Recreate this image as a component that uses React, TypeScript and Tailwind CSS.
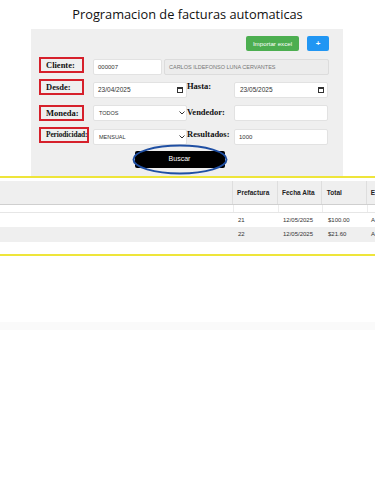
import React from "react";

const Label = ({ text, w, fs = "text-[8.5px]" }: { text: string; w: string; fs?: string }) => (
  <div className={`${w} ${fs} h-[16px] border-2 border-[#d6202b] flex items-center pl-[5px] font-['Liberation_Serif'] font-bold text-[#111] whitespace-nowrap overflow-visible`}>
    {text}
  </div>
);

const RLabel = ({ text }: { text: string }) => (
  <div className="w-[47px] font-['Liberation_Serif'] font-bold text-[8.5px] text-[#111] whitespace-nowrap leading-none pt-[3px]">
    {text}
  </div>
);

const Cal = () => (
  <svg width="6" height="6" viewBox="0 0 6 6" className="mr-[3px]">
    <rect x="0.5" y="0.5" width="5" height="5" fill="none" stroke="#333" strokeWidth="1" />
    <rect x="0.5" y="0.5" width="5" height="1.5" fill="#333" />
  </svg>
);

const Chev = () => (
  <svg width="6" height="4" viewBox="0 0 6 4" className="mr-[1px]">
    <path d="M0.5 0.5 L3 3 L5.5 0.5" fill="none" stroke="#333" strokeWidth="1" />
  </svg>
);

export default function App() {
  return (
    <div className="w-[375px] h-[481px] bg-white font-['Liberation_Sans',sans-serif] overflow-hidden">
      <div className="h-[29px] flex items-center justify-center font-['Open_Sans',sans-serif] text-[12.8px] text-[#111] pt-[1px]">
        Programacion de facturas automaticas
      </div>

      <div className="ml-[31px] w-[312px] h-[147px] bg-[#efefef] pt-[7px] pl-[8px]">
        <div className="flex justify-end gap-[8px] pr-[14px] h-[15px]">
          <div className="w-[53px] h-[15px] rounded-[2px] bg-[#4cae50] text-white text-[6.2px] flex items-center justify-center">
            Importar excel
          </div>
          <div className="w-[22px] h-[15px] rounded-[2px] bg-[#2196f3] text-white text-[8px] font-bold flex items-center justify-center">
            +
          </div>
        </div>

        <div className="flex items-start mt-[6px] h-[18px]">
          <div className="w-[54px] pt-0">
            <Label text="Cliente:" w="w-[45px]" />
          </div>
          <div className="mt-[2px] w-[69px] h-[16px] bg-white border border-[#e2e2e2] rounded-[2px] flex items-center pl-[4px] text-[6px] text-[#333]">
            000007
          </div>
          <div className="mt-[2px] ml-[2px] w-[165px] h-[16px] bg-[#ececec] border border-[#dcdcdc] rounded-[2px] flex items-center pl-[4px] text-[5.5px] text-[#777]">
            CARLOS ILDEFONSO LUNA CERVANTES
          </div>
        </div>

        <div className="flex items-start mt-[4px] h-[19px]">
          <div className="w-[54px]">
            <Label text="Desde:" w="w-[45px]" />
          </div>
          <div className="mt-[3px] w-[94px] h-[16px] bg-white border border-[#e2e2e2] rounded-[2px] flex items-center justify-between pl-[4px] text-[6.5px] text-[#333]">
            <span>23/04/2025</span>
            <Cal />
          </div>
          <RLabel text="Hasta:" />
          <div className="mt-[3px] w-[94px] h-[16px] bg-white border border-[#e2e2e2] rounded-[2px] flex items-center justify-between pl-[5px] text-[6.5px] text-[#333]">
            <span>23/05/2025</span>
            <Cal />
          </div>
        </div>

        <div className="flex items-start mt-[7px] h-[16px]">
          <div className="w-[54px]">
            <Label text="Moneda:" w="w-[45px]" />
          </div>
          <div className="w-[94px] h-[16px] bg-white border border-[#e2e2e2] rounded-[2px] flex items-center justify-between pl-[5px] text-[5.5px] text-[#333]">
            <span>TODOS</span>
            <Chev />
          </div>
          <RLabel text="Vendedor:" />
          <div className="w-[94px] h-[16px] bg-white border border-[#e2e2e2] rounded-[2px]" />
        </div>

        <div className="flex items-start mt-[6px] h-[18px]">
          <div className="w-[54px]">
            <Label text="Periodicidad:" w="w-[50px]" fs="text-[7.4px] tracking-[-0.1px] pl-[4px]" />
          </div>
          <div className="mt-[2px] w-[94px] h-[16px] bg-white border border-[#e2e2e2] rounded-[2px] flex items-center justify-between pl-[5px] text-[5.5px] text-[#333]">
            <span>MENSUAL</span>
            <Chev />
          </div>
          <RLabel text="Resultados:" />
          <div className="mt-[2px] w-[94px] h-[16px] bg-white border border-[#e2e2e2] rounded-[2px] flex items-center pl-[4px] text-[6px] text-[#333]">
            1000
          </div>
        </div>

        <div className="flex justify-center mt-[6px] pr-[23px]">
          <div className="relative">
            <div className="w-[90px] h-[17px] bg-black rounded-[2px] text-white text-[7px] flex items-center justify-center">
              Buscar
            </div>
            <svg className="absolute left-[-3px] top-[-7px]" width="96" height="31" viewBox="0 0 96 31">
              <ellipse cx="48" cy="15.5" rx="46.5" ry="14" fill="none" stroke="#1f4fa3" strokeWidth="2" />
            </svg>
          </div>
        </div>
      </div>

      <div className="border-y-2 border-[#eee53a] h-[80px] pt-[3px]">
        <div className="flex h-[24px] bg-[#efefef] border-b border-[#cfcfcf] text-[6.5px] font-bold text-[#222]">
          <div className="w-[234px] border-r border-[#dedede]" />
          <div className="w-[45px] border-r border-[#dedede] pl-[4px] pt-[7px]">Prefactura</div>
          <div className="w-[44px] border-r border-[#dedede] pl-[4px] pt-[7px]">Fecha Alta</div>
          <div className="w-[45px] border-r border-[#dedede] pl-[5px] pt-[7px]">Total</div>
          <div className="flex-1 pl-[4px] pt-[7px]">E</div>
        </div>
        <div className="flex h-[8px] bg-white border-b border-[#e6e6e6]">
          <div className="w-[234px] border-r border-[#ececec]" />
          <div className="w-[45px] border-r border-[#ececec]" />
          <div className="w-[44px] border-r border-[#ececec]" />
          <div className="w-[45px] border-r border-[#ececec]" />
          <div className="flex-1" />
        </div>
        <div className="flex h-[14px] bg-white items-center text-[6px] text-[#333]">
          <div className="w-[234px]" />
          <div className="w-[45px] pl-[4px]">21</div>
          <div className="w-[44px] pl-[4px]">12/05/2025</div>
          <div className="w-[45px] pl-[5px]">$100.00</div>
          <div className="flex-1 pl-[3px]">A</div>
        </div>
        <div className="flex h-[15px] bg-[#efefef] items-center text-[6px] text-[#333]">
          <div className="w-[234px]" />
          <div className="w-[45px] pl-[4px]">22</div>
          <div className="w-[44px] pl-[4px]">12/05/2025</div>
          <div className="w-[45px] pl-[5px]">$21.60</div>
          <div className="flex-1 pl-[3px]">A</div>
        </div>
      </div>

      <div className="h-[66px]" />
      <div className="h-[8px] bg-[#fafafa]" />
    </div>
  );
}
